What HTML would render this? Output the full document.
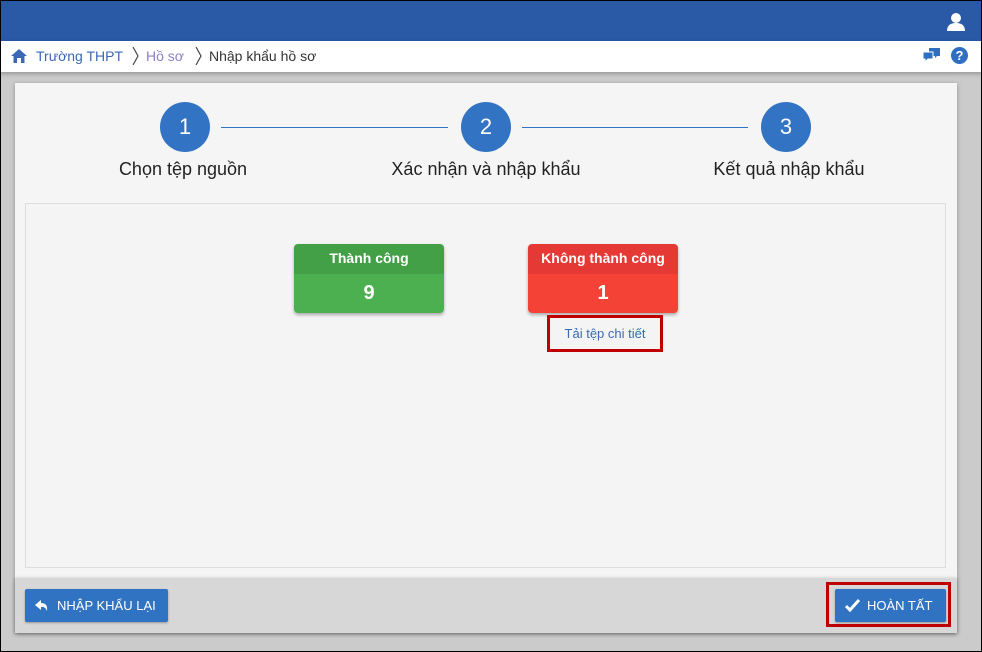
<!DOCTYPE html>
<html><head><meta charset="utf-8"><style>
*{margin:0;padding:0;box-sizing:border-box}
body{width:982px;height:652px;overflow:hidden;font-family:"Liberation Sans",sans-serif;background:#cbcbcb}
.abs{position:absolute}
.frame{left:0;top:0;width:982px;height:652px;border:1px solid #000;pointer-events:none;z-index:9}
.hdr{left:0;top:0;width:982px;height:41px;background:#2a59a5}
.bc{left:0;top:41px;width:982px;height:31px;background:#fff;box-shadow:0 2px 4px rgba(0,0,0,.25);font-size:14px;line-height:31px;color:#3a68b5}
.panel{left:15px;top:83px;width:942px;height:550px;background:#f5f5f5;box-shadow:0 1px 4px rgba(0,0,0,.3)}
.circ{width:50px;height:50px;border-radius:50%;background:#3273c4;color:#fff;font-size:22px;text-align:center;line-height:50px}
.line{height:1px;background:#3273c4}
.lbl{font-size:18px;color:#222;text-align:center;width:300px}
.card{width:150px;height:69px;border-radius:4px;overflow:hidden;box-shadow:0 2px 3px rgba(0,0,0,.3);color:#fff;text-align:center;font-weight:bold}
.card .h{height:30px;line-height:29px;font-size:14px}
.card .b{height:39px;line-height:38px;font-size:20px}
.btn{background:#3173c3;color:#fff;font-size:13px;height:33px;line-height:33px;border-radius:2px;box-shadow:0 1px 2px rgba(0,0,0,.3)}
</style></head><body>
<div class="abs hdr"></div>
<svg class="abs" style="left:946px;top:12px" width="20" height="20" viewBox="0 0 20 20"><circle cx="10" cy="6" r="5" fill="#fff"/><path d="M1 19 Q1 11 10 11 Q19 11 19 19Z" fill="#fff"/></svg>
<div class="abs bc">
<svg class="abs" style="left:11px;top:8px" width="16" height="14" viewBox="0 0 16 14"><path d="M8 0 L16 7 H13.5 V14 H10 V9 H6 V14 H2.5 V7 H0Z" fill="#3a68b5"/></svg>
<span class="abs" style="left:36px">Trường THPT</span>
<svg class="abs" style="left:132px;top:6px" width="8" height="18" viewBox="0 0 8 18"><path d="M1 0 L6 9 L1 18" stroke="#444" stroke-width="1.2" fill="none"/></svg>
<span class="abs" style="left:146px;color:#8f7fc9">Hồ sơ</span>
<svg class="abs" style="left:195px;top:6px" width="8" height="18" viewBox="0 0 8 18"><path d="M1 0 L6 9 L1 18" stroke="#444" stroke-width="1.2" fill="none"/></svg>
<span class="abs" style="left:209px;color:#333">Nhập khẩu hồ sơ</span>
<svg class="abs" style="left:922px;top:6px" width="19" height="17" viewBox="0 0 19 17"><path d="M7 1 H18 V9 H15 L13 11 V9 H7Z" fill="#2f6fc0"/><path d="M1 5 H11 V12 H6 L3 15 V12 H1Z" fill="#2f6fc0" stroke="#fff" stroke-width="1"/></svg>
<div class="abs" style="left:951px;top:6px;width:17px;height:17px;border-radius:50%;background:#2f6fc0;color:#fff;font-size:13px;font-weight:bold;line-height:17px;text-align:center">?</div>
</div>
<div class="abs panel"></div>
<div class="abs circ" style="left:160px;top:102px">1</div>
<div class="abs circ" style="left:461px;top:102px">2</div>
<div class="abs circ" style="left:761px;top:102px">3</div>
<div class="abs line" style="left:221px;top:127px;width:227px"></div>
<div class="abs line" style="left:522px;top:127px;width:226px"></div>
<div class="abs lbl" style="left:33px;top:159px">Chọn tệp nguồn</div>
<div class="abs lbl" style="left:336px;top:159px">Xác nhận và nhập khẩu</div>
<div class="abs lbl" style="left:639px;top:159px">Kết quả nhập khẩu</div>
<div class="abs" style="left:25px;top:203px;width:921px;height:365px;border:1px solid #ddd;background:#f4f4f4"></div>
<div class="abs card" style="left:294px;top:244px"><div class="h" style="background:#43a047">Thành công</div><div class="b" style="background:#4caf50">9</div></div>
<div class="abs card" style="left:528px;top:244px"><div class="h" style="background:#e53935">Không thành công</div><div class="b" style="background:#f44336">1</div></div>
<div class="abs" style="left:547px;top:315px;width:116px;height:37px;border:3px solid #c00000;color:#3a68b5;font-size:13px;text-align:center;line-height:31px">Tải tệp chi tiết</div>
<div class="abs" style="left:15px;top:578px;width:942px;height:55px;background:#d7d7d7;box-shadow:0 1px 4px rgba(0,0,0,.3)"></div>
<div class="abs btn" style="left:25px;top:589px;width:143px">
<svg class="abs" style="left:10px;top:11px" width="13" height="11" viewBox="0 0 13 11"><path d="M0 5 L6 0 V3 Q13 3 12 11 Q10 6 6 7 V10Z" fill="#fff"/></svg>
<span class="abs" style="left:32px">NHẬP KHẨU LẠI</span></div>
<div class="abs" style="left:826px;top:582px;width:125px;height:45px;border:3px solid #c00000"></div>
<div class="abs btn" style="left:835px;top:589px;width:111px">
<svg class="abs" style="left:10px;top:10px" width="15" height="13" viewBox="0 0 15 13"><path d="M1 7 L5 11 L14 1" stroke="#fff" stroke-width="3" fill="none"/></svg>
<span class="abs" style="left:32px">HOÀN TẤT</span></div>
<div class="abs frame"></div>
</body></html>
